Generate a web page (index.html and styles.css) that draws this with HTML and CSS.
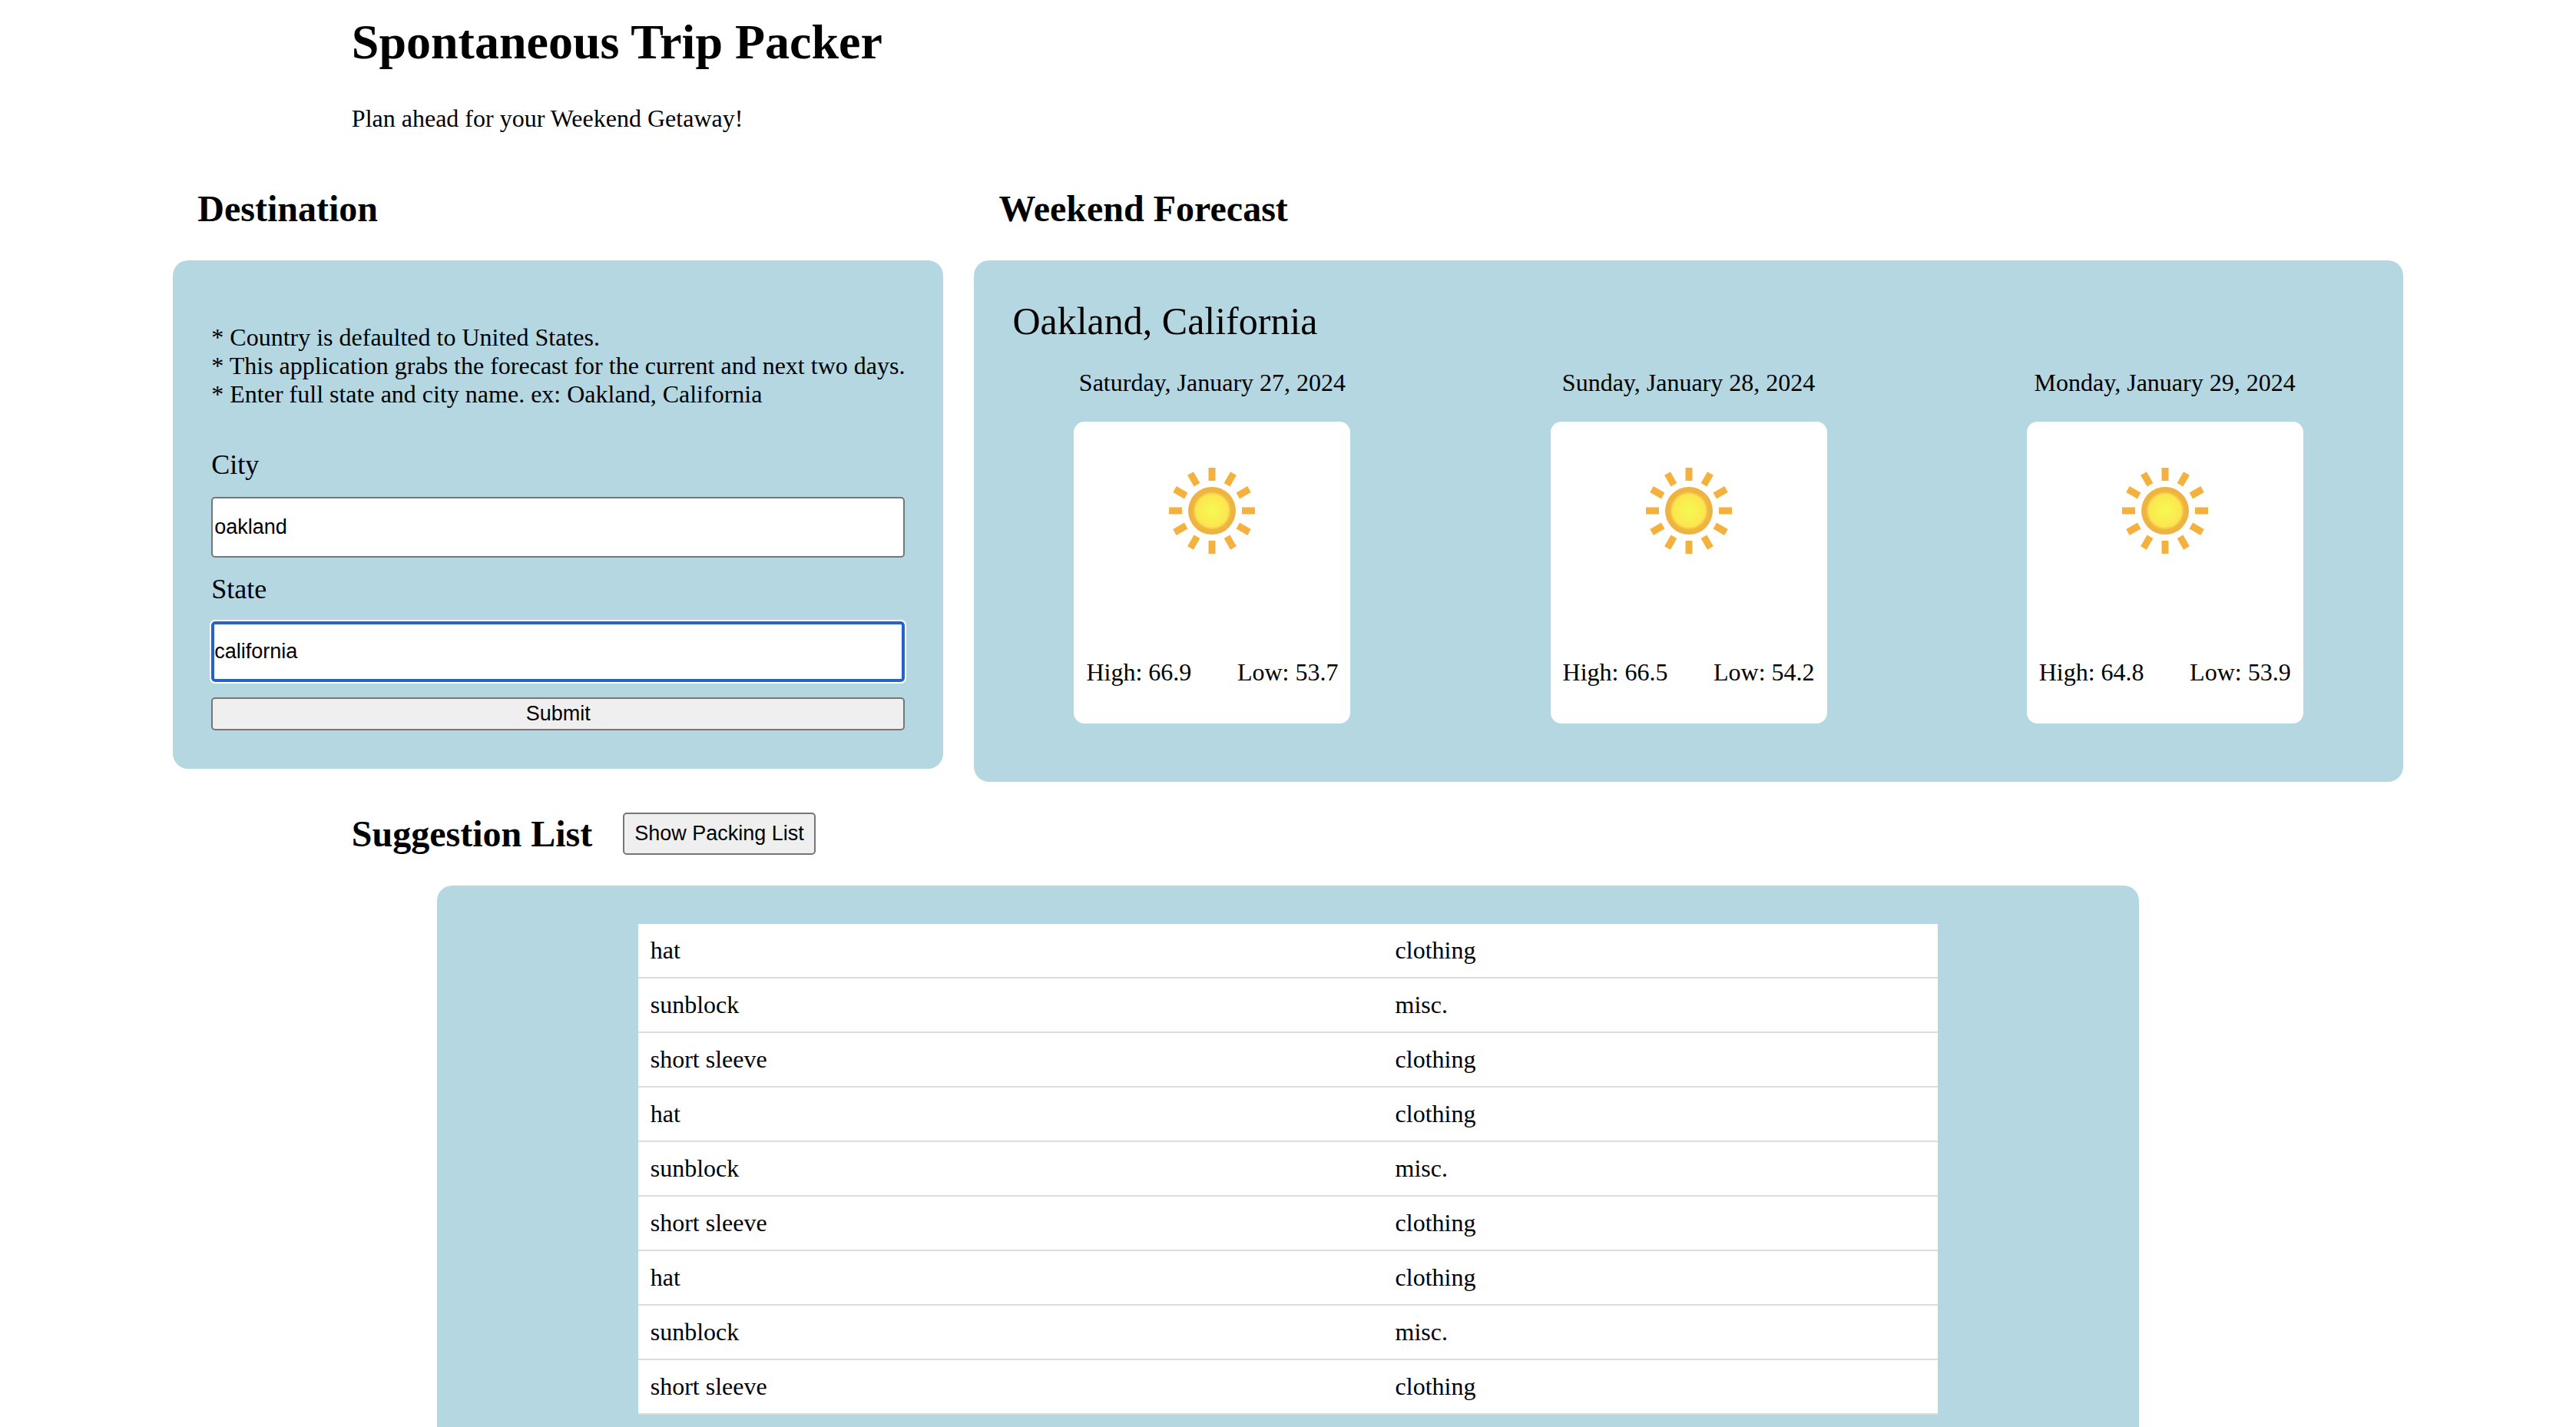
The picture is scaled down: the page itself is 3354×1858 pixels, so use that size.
FILE: index.html
```html
<!DOCTYPE html>
<html lang="en">
<head>
  <meta charset="utf-8">
  <title>Spontaneous Trip Packer</title>
  <meta name="viewport" content="width=device-width, initial-scale=1">
  <link rel="stylesheet" href="styles.css">
</head>
<body>
  <svg class="sprite" aria-hidden="true">
    <defs>
      <radialGradient id="sun-core">
        <stop offset="0" stop-color="#f5fa50"/>
        <stop offset="0.68" stop-color="#fce650"/>
        <stop offset="0.8" stop-color="#efb640"/>
        <stop offset="1" stop-color="#f0b040"/>
      </radialGradient>
      <symbol id="sun" viewBox="-64 -64 128 128">
        <circle r="31" fill="url(#sun-core)"/>
        <g fill="none" stroke="#f4b13e" stroke-width="9">
          <path id="ray" d="M0-39V-56"/>
          <use href="#ray" transform="rotate(30)"/>
          <use href="#ray" transform="rotate(60)"/>
          <use href="#ray" transform="rotate(90)"/>
          <use href="#ray" transform="rotate(120)"/>
          <use href="#ray" transform="rotate(150)"/>
          <use href="#ray" transform="rotate(180)"/>
          <use href="#ray" transform="rotate(210)"/>
          <use href="#ray" transform="rotate(240)"/>
          <use href="#ray" transform="rotate(270)"/>
          <use href="#ray" transform="rotate(300)"/>
          <use href="#ray" transform="rotate(330)"/>
        </g>
      </symbol>
    </defs>
  </svg>

  <header class="page-header">
    <h1>Spontaneous Trip Packer</h1>
    <p>Plan ahead for your Weekend Getaway!</p>
  </header>

  <main>
    <div class="planner">
      <section class="destination">
        <h2>Destination</h2>
        <form class="panel destination-form">
          <p class="notes">
            * Country is defaulted to United States.<br>
            * This application grabs the forecast for the current and next two days.<br>
            * Enter full state and city name. ex: Oakland, California
          </p>
          <label for="city">City</label>
          <input id="city" type="text" value="oakland">
          <label for="state">State</label>
          <input id="state" class="active" type="text" value="california">
          <button type="submit">Submit</button>
        </form>
      </section>

      <section class="forecast">
        <h2>Weekend Forecast</h2>
        <div class="panel forecast-panel">
          <p class="place">Oakland, California</p>
          <div class="days">
            <article class="day">
              <p>Saturday, January 27, 2024</p>
              <div class="card">
                <svg class="icon" role="img" aria-label="Sunny"><use href="#sun"/></svg>
                <div class="temps"><span>High: 66.9</span><span>Low: 53.7</span></div>
              </div>
            </article>
            <article class="day">
              <p>Sunday, January 28, 2024</p>
              <div class="card">
                <svg class="icon" role="img" aria-label="Sunny"><use href="#sun"/></svg>
                <div class="temps"><span>High: 66.5</span><span>Low: 54.2</span></div>
              </div>
            </article>
            <article class="day">
              <p>Monday, January 29, 2024</p>
              <div class="card">
                <svg class="icon" role="img" aria-label="Sunny"><use href="#sun"/></svg>
                <div class="temps"><span>High: 64.8</span><span>Low: 53.9</span></div>
              </div>
            </article>
          </div>
        </div>
      </section>
    </div>

    <section class="suggestions">
      <div class="suggestions-header">
        <h2>Suggestion List</h2>
        <button type="button">Show Packing List</button>
      </div>
      <div class="panel suggestions-panel">
        <table>
          <tbody>
            <tr><td>hat</td><td>clothing</td></tr>
            <tr><td>sunblock</td><td>misc.</td></tr>
            <tr><td>short sleeve</td><td>clothing</td></tr>
            <tr><td>hat</td><td>clothing</td></tr>
            <tr><td>sunblock</td><td>misc.</td></tr>
            <tr><td>short sleeve</td><td>clothing</td></tr>
            <tr><td>hat</td><td>clothing</td></tr>
            <tr><td>sunblock</td><td>misc.</td></tr>
            <tr><td>short sleeve</td><td>clothing</td></tr>
          </tbody>
        </table>
      </div>
    </section>
  </main>
</body>
</html>
```
FILE: styles.css
```css
* {
  box-sizing: border-box;
}

body {
  margin: 0;
  padding: 18px 16px 0;
  background: #fff;
  color: #000;
  font: 32px/37px "Liberation Serif", "Times New Roman", serif;
  overflow-x: hidden;
}

h1,
h2,
p {
  margin: 0;
}

h1 {
  font-size: 64px;
  line-height: 74px;
}

h2 {
  font-size: 48px;
  line-height: 55px;
}

.sprite {
  position: absolute;
  width: 0;
  height: 0;
}

.page-header,
.suggestions-header {
  width: 73.4%;
  margin: 0 auto;
}

.page-header p {
  margin-top: 44px;
}

.panel {
  border-radius: 20px;
  background: #b4d7e2;
}

.planner {
  display: flex;
  justify-content: center;
  align-items: flex-start;
  gap: 40px;
  margin-top: 71px;
}

.planner h2 {
  margin: 0 32px 40px;
}

input,
button {
  border: 2px solid #767676;
  border-radius: 5px;
  color: #000;
  font: 27px/31px "Liberation Sans", Arial, sans-serif;
}

button {
  background: #efefef;
}

.destination-form {
  display: flex;
  flex-direction: column;
  gap: 20px;
  padding: 50px;
}

.notes {
  margin: 32px 0;
}

.destination-form label {
  font-size: 36px;
  line-height: 43px;
}

.destination-form input {
  width: 100%;
  height: 79px;
  padding: 0 2px;
  background: #fff;
}

.destination-form input.active {
  outline: 2px solid #fff;
  border: 4px solid #2563c9;
  padding: 0;
}

.destination-form button {
  height: 43px;
  padding: 0;
}

.forecast {
  width: 56%;
}

.forecast-panel {
  padding: 52px 0 76px;
}

.place {
  padding: 0 50px;
  font-size: 50px;
  line-height: 55px;
}

.days {
  display: grid;
  grid-template-columns: repeat(3, 1fr);
  margin-top: 34px;
}

.day {
  display: flex;
  flex-direction: column;
  align-items: center;
  gap: 32px;
}

.card {
  display: flex;
  flex-direction: column;
  align-items: center;
  gap: 128px;
  width: 360px;
  padding: 52px 16px 48px;
  border-radius: 14px;
  background: #fff;
}

.icon {
  width: 128px;
  height: 128px;
}

.temps {
  display: flex;
  justify-content: space-between;
  width: 100%;
}

.suggestions {
  margin-top: 40px;
}

.suggestions-header {
  display: flex;
  align-items: center;
  gap: 40px;
}

.suggestions-header button {
  height: 55px;
  padding: 0 13px;
}

.suggestions-panel {
  width: 66.7%;
  margin: 40px auto 0;
  padding: 50px;
}

table {
  width: 80%;
  margin: 0 auto;
  border-collapse: collapse;
  background: #fff;
}

td {
  padding: 16px;
  border-bottom: 2px solid #ddd;
}

td:first-child {
  width: 57.3%;
}
```
